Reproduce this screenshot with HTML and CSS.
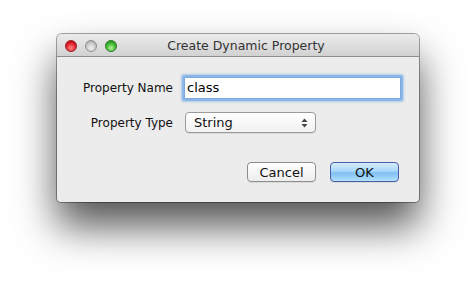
FILE: index.html
```html
<!DOCTYPE html>
<html>
<head>
<meta charset="utf-8">
<link rel="stylesheet" href="styles.css">
</head>
<body>
<div class="stage">
  <div class="window">
    <div class="titlebar">
      <div class="lights">
        <span class="light red"></span>
        <span class="light gray"></span>
        <span class="light green"></span>
      </div>
      <div class="title">Create Dynamic Property</div>
    </div>
    <div class="content">
      <div class="form">
        <label class="label">Property Name</label>
        <div class="field">class</div>
        <label class="label">Property Type</label>
        <div class="popup">
          <span>String</span>
          <svg class="arrows" width="7" height="10" viewBox="0 0 7 10">
            <path d="M3.5 0.5 L6.5 4 L0.5 4 Z" fill="#444"/>
            <path d="M3.5 9.5 L6.5 6 L0.5 6 Z" fill="#444"/>
          </svg>
        </div>
      </div>
      <div class="buttons">
        <div class="btn">Cancel</div>
        <div class="btn default">OK</div>
      </div>
    </div>
  </div>
</div>
</body>
</html>
```
FILE: styles.css
```css
html, body {
  margin: 0;
  padding: 0;
  background: #ffffff;
}
.stage {
  width: 476px;
  height: 281px;
  padding: 34px 0 0 57px;
  box-sizing: border-box;
  font-family: "DejaVu Sans", "Liberation Sans", sans-serif;
  font-size: 12px;
  color: #1a1a1a;
}
.window {
  width: 362px;
  height: 168px;
  border-radius: 5px 5px 4px 4px;
  background: #ececec;
  box-shadow: 0 0 0 1px rgba(0,0,0,0.35), 0 24px 40px rgba(0,0,0,0.68);
  display: flex;
  flex-direction: column;
  overflow: hidden;
}
.titlebar {
  height: 22px;
  border-bottom: 1px solid #8f8f8f;
  background: linear-gradient(#ebebeb, #d2d2d2);
  position: relative;
  display: flex;
  align-items: center;
  justify-content: center;
}
.lights {
  position: absolute;
  left: 8px;
  top: 6px;
  display: flex;
  gap: 8px;
}
.light {
  width: 12px;
  height: 12px;
  border-radius: 50%;
  box-sizing: border-box;
}
.red {
  background: radial-gradient(circle at 50% 70%, #ff8a8a 0%, #e0202a 55%, #a2000a 100%);
  border: 1px solid #9a1c20;
}
.gray {
  background: radial-gradient(circle at 50% 70%, #f2f2f2 0%, #c8c8c8 55%, #9c9c9c 100%);
  border: 1px solid #8e8e8e;
}
.green {
  background: radial-gradient(circle at 50% 70%, #b6f29a 0%, #3cb732 55%, #1f7a1a 100%);
  border: 1px solid #2e7a25;
}
.title {
  font-size: 12.5px;
  color: #333;
  margin-left: 16px;
  margin-top: 1px;
}
.content {
  flex: 1;
  display: flex;
  flex-direction: column;
  padding: 20px 18px 0 0;
}
.form {
  display: grid;
  grid-template-columns: 116px auto;
  column-gap: 11px;
  row-gap: 13px;
  align-items: center;
  justify-items: start;
}
.label {
  justify-self: end;
  color: #111;
}
.field {
  width: 217px;
  height: 22px;
  box-sizing: border-box;
  background: #fff;
  border: 1px solid #7ea6d6;
  box-shadow: 0 0 0 2px #8ab8ea, 0 0 2px 3px rgba(120,170,230,0.5);
  border-radius: 1px;
  padding: 2px 0 0 2px;
  font-size: 13px;
  color: #000;
}
.popup {
  width: 131px;
  height: 21px;
  margin-left: 1px;
  box-sizing: border-box;
  border: 1px solid #9a9a9a;
  border-radius: 4px;
  background: linear-gradient(#ffffff, #f1f1f1);
  box-shadow: 0 1px 0 rgba(0,0,0,0.08);
  display: flex;
  align-items: center;
  justify-content: space-between;
  padding: 0 7px 0 8px;
  font-size: 13px;
  color: #111;
}
.arrows {
  display: block;
}
.buttons {
  display: flex;
  justify-content: flex-end;
  gap: 14px;
  margin-top: 29px;
  padding-right: 2px;
}
.btn {
  width: 69px;
  height: 20px;
  box-sizing: border-box;
  border: 1px solid #8e8e8e;
  border-radius: 4px;
  background: linear-gradient(#ffffff, #ededed);
  box-shadow: 0 1px 0 rgba(0,0,0,0.08);
  display: flex;
  align-items: center;
  justify-content: center;
  font-size: 13px;
  color: #111;
}
.btn.default {
  border-color: #4c5fa6;
  background: linear-gradient(#d4edfd 0%, #a9d7f9 45%, #7ebef2 55%, #b2e2ff 100%);
}
```
